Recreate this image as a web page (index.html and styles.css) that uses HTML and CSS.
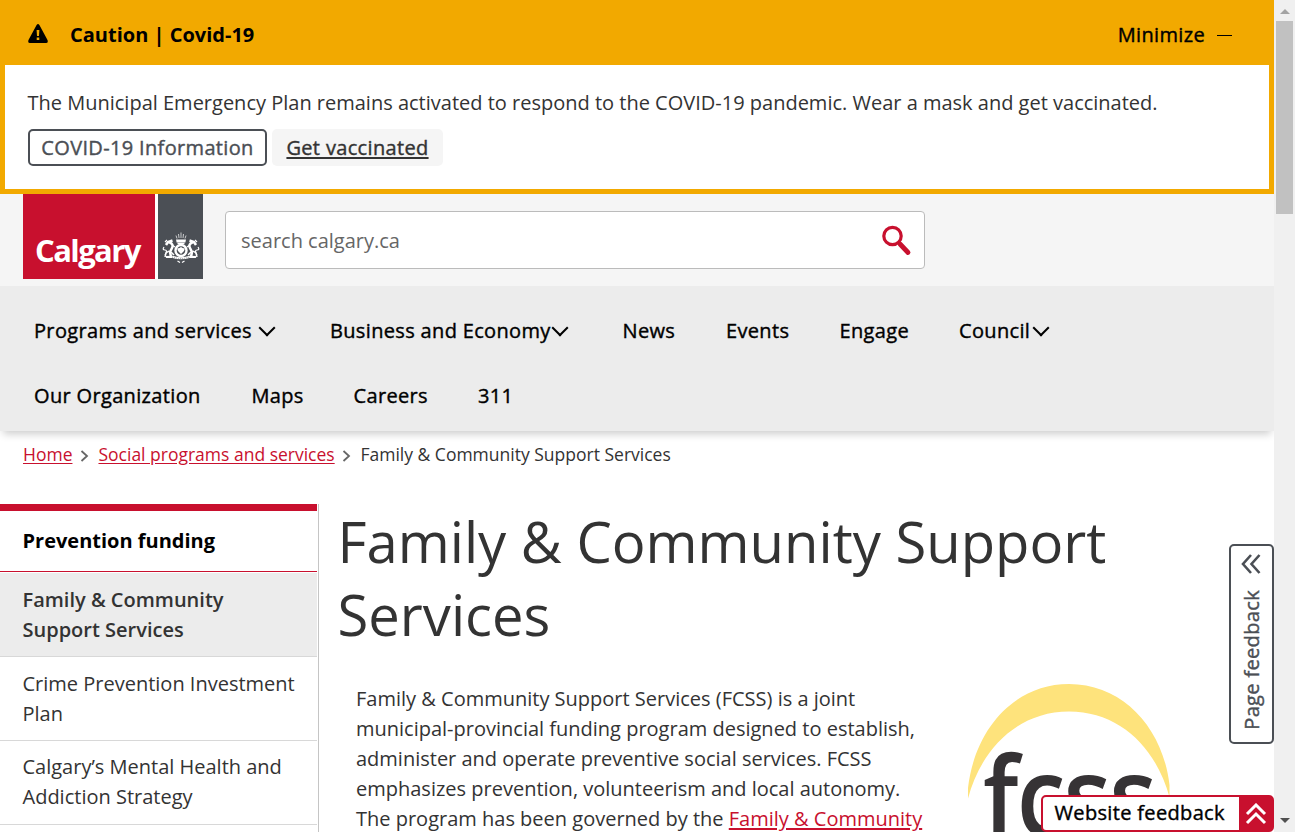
FILE: index.html
```
<!DOCTYPE html>
<html lang="en">
<head>
<meta charset="utf-8">
<title>Family &amp; Community Support Services</title>
<link rel="stylesheet" href="styles.css">
</head>
<body>
<div class="page">
  <section class="alert">
    <div class="alert-head">
      <svg class="warn" width="20" height="19" viewBox="0 0 20 19"><path fill-rule="evenodd" d="M8.6 1.1Q10-1 11.400 1.100L19.500 16Q20.500 19 18 19H2Q-.5 19 .5 16ZM8.600 6l.4 6h2l.4-6ZM8.700 13.500v2.500h2.600v-2.500Z"/></svg>
      <strong class="alert-title">Caution | Covid-19</strong>
      <span class="minimize medium">Minimize</span><span class="dash"></span>
    </div>
    <div class="alert-body">
      <p class="alert-text">The Municipal Emergency Plan remains activated to respond to the COVID-19 pandemic. Wear a mask and get vaccinated.</p>
      <div class="buttons"><a class="btn outline medium"><span>COVID-19 Information</span></a><a class="btn soft medium"><span>Get vaccinated</span></a></div>
    </div>
  </section>
  <header class="header">
    <div class="logo">
      <div class="logo-red"><span>Calgary</span></div>
      <div class="logo-grey">
        <svg width="38" height="34" viewBox="0 0 38 34" fill="#fff" stroke="#fff">
          <path stroke="none" d="M14 8.500h10l-.6 3h-8.800Z"/>
          <path fill="none" stroke-width=".7" d="M14 4.500l1 3M16.500 3l.5 4M19 1.500v5.500M21.500 3l-.5 4M24 4.500l-1 3"/>
          <path fill="none" stroke-width="1.500" d="M15.500 12.500h7"/>
          <circle cx="19" cy="19.500" r="5.500" fill="none" stroke-width="2.400"/>
          <path stroke="none" d="M19 16l1.500 1 2.300.5-.8 2.500-3 3-3-3-.8-2.500 2.300-.5Z"/>
          <path fill="none" stroke-width="2.500" d="M10.500 9.500L6 11l-2 3M7 11q5 2 3 6l-2 4 1 5"/>
          <path fill="none" stroke-width="1.500" d="M10 14l3 2M7 20l-3 2-1 4M9 21l3 3"/>
          <path fill="none" stroke-width="1.200" d="M2 16q-2 3 1 3t0 5M3 11l2-2"/>
          <path fill="none" stroke-width="2.500" d="M27.500 9.500L32 11l2 3M31 11q-5 2-3 6l2 4-1 5"/>
          <path fill="none" stroke-width="1.500" d="M28 14l-3 2M31 20l3 2 1 4M29 21l-3 3"/>
          <path fill="none" stroke-width="1.200" d="M36 16q2 3-1 3t0 5M35 11l-2-2"/>
          <path fill="none" stroke-width="2" d="M4 26l6-.3q9 3 18 0l6 .3"/>
          <path fill="none" stroke="#4b4f55" stroke-width=".6" stroke-dasharray="1 1" d="M10 26q9 3 18 0"/>
          <path fill="none" stroke-width="1.200" d="M15.500 30l2.500 1.500m2 0l2.500-1.500"/>
        </svg>
      </div>
    </div>
    <div class="search"><span>search calgary.ca</span>
      <svg width="30" height="32" viewBox="0 0 30 32" fill="none" stroke="#c8102e"><circle cx="10.500" cy="11" r="8.700" stroke-width="3.200"/><path stroke-width="4.800" stroke-linecap="round" d="M18 19l8 8.500"/></svg>
    </div>
  </header>
  <nav class="nav medium">
    <div class="nav-row">
      <a class="n1">Programs and services</a><a class="n2">Business and Economy</a><a class="n3">News</a><a class="n4">Events</a><a class="n5">Engage</a><a class="n6">Council</a>
    </div>
    <div class="nav-row second">
      <a class="m1">Our Organization</a><a class="m2">Maps</a><a class="m3">Careers</a><a class="m4">311</a>
    </div>
  </nav>
  <div class="crumbs">
    <a class="c1">Home</a><svg width="9" height="12" viewBox="0 0 9 12"><path d="M1.500 1L7 6l-5.500 5"/></svg><a class="c2">Social programs and services</a><svg width="9" height="12" viewBox="0 0 9 12"><path d="M1.500 1L7 6l-5.500 5"/></svg><span class="c3">Family &amp; Community Support Services</span>
  </div>
  <div class="content">
    <aside class="side">
      <div class="side-head">Prevention funding</div>
      <div class="side-item current">Family &amp; Community<br>Support Services</div>
      <div class="side-item">Crime Prevention Investment<br>Plan</div>
      <div class="side-item third">Calgary’s Mental Health and<br>Addiction Strategy</div>
    </aside>
    <main class="main">
      <h1>Family &amp; Community Support<br>Services</h1>
      <div class="intro">
        <p>Family &amp; Community Support Services (FCSS) is a joint<br>municipal-provincial funding program designed to establish,<br>administer and operate preventive social services. FCSS<br>emphasizes prevention, volunteerism and local autonomy.<br>The program has been governed by the <a>Family &amp; Community</a></p>
        <svg class="fcss" width="204" height="149" viewBox="0 0 204 149"><path fill="#fee37c" d="M0 114.500V104C7 44 47 0 101 0s94 44 100.500 101v12C188 64 152 27.500 101 27.500S13 65 0 114.500Z"/><text transform="translate(15 152) scale(.89 1)" fill="#363335">fcss</text></svg>
      </div>
    </main>
  </div>
</div>
<div class="scrollbar"><i class="up"></i><i class="thumb"></i><i class="down"></i></div>
<div class="page-feedback medium"><svg width="20" height="22" viewBox="0 0 20 22"><path d="M10 2L2 11l8 9M18.500 2l-8 9 8 9"/></svg><span>Page feedback</span></div>
<div class="site-feedback medium"><span>Website feedback</span><div class="fb-icon"><svg width="22" height="22" viewBox="0 0 22 22"><path d="M2 11l9-9 9 9M2 20l9-9 9 9"/></svg></div></div>
</body>
</html>
```
FILE: styles.css
```
*{box-sizing:border-box}
body{margin:0;width:1295px;height:832px;overflow:hidden;display:flex;position:relative;background:#fff;color:#333;font:400 20px/30px "Open Sans","Noto Sans",sans-serif}
p,h1{margin:0}
svg{flex:none}
a,span,strong,p,h1{white-space:nowrap}
.medium{letter-spacing:.34px;-webkit-text-stroke:.4px currentColor}
.page{width:1274px;height:832px;overflow:hidden;flex:none}
.alert{height:194px;background:#f2a900;padding:0 5px 5px}
.alert-head{height:65px;display:flex;align-items:center;padding:4px 37px 0 22px;color:#000}
.warn{margin:-3px 0 0 1px}
.alert-title{font-weight:700;margin-left:22px;flex:1}
.dash{width:15px;height:1px;background:#000;margin:2px 0 0 12px}
.alert-body{height:124px;background:#fff;padding:23px 22.500px}
.buttons{display:flex;gap:5px;margin:11px 0 0 .5px}
.btn{height:37px;border-radius:5px;display:flex;align-items:center;justify-content:center}
.outline{width:239px;border:2px solid #4b4f55;color:#4b4f55}
.soft{width:171px;background:#f5f5f5}
.soft span{text-decoration:underline;text-decoration-thickness:2px;text-underline-offset:2px}
.header{height:92px;background:#f5f5f5;display:flex;padding-left:23px}
.logo{display:flex;width:180px;height:85px;gap:3px;background:#fff}
.logo-red{width:132px;background:#c8102e;color:#fff;font-size:31px;font-weight:700;line-height:36px;padding:38px 0 0 12px;letter-spacing:-1.600px}
.logo-grey{width:45px;background:#4b4f55;padding:37px 0 0 4px}
.search{width:700px;height:58px;margin:17px 0 0 22px;border:1px solid #bbb;border-radius:4px;background:#fff;display:flex;align-items:center;justify-content:space-between;padding:2px 12px 0 15px;color:#666}
.nav{height:145px;background:#ececec;padding:30px 34px 0;color:#000;box-shadow:0 6px 8px -3px #0003}
.nav-row{display:flex}
.nav-row.second{margin-top:35px}
.nav a{display:flex;align-items:center;justify-content:space-between;flex:none}
.n1:after,.n2:after,.n6:after{content:"";width:10px;height:10px;border:solid #000;border-width:0 2px 2px 0;transform:rotate(45deg);margin:-6px 3px 0 0}
.n1{width:242px}
.n2{width:239px;margin-left:54px}
.n3{width:103.500px;margin-left:53.500px}
.n4{width:113.500px}
.n5{width:119.500px}
.n6{width:91px}
.m1{width:217.500px}
.m2{width:102px}
.m3{width:124.500px}
.crumbs{height:73px;padding:8px 23px 0;display:flex;font-size:17.500px}
.crumbs svg{margin:11px 9px 0 8px;fill:none;stroke:#666;stroke-width:1.800}
.c1,.c2,.intro a{color:#c8102e;text-decoration:underline;text-underline-offset:2px}
.c2{width:236px}
.content{display:flex;height:328px}
.side{width:319px;border-right:1px solid #c5c5c5;padding-right:1px;flex:none}
.side-head{height:68px;border-top:7px solid #c8102e;border-bottom:1px solid #c8102e;padding:15px 22.500px;font-weight:700;color:#000;line-height:30px}
.side-item{height:84px;padding:12px 22.500px;border-bottom:1px solid #d8d8d8;white-space:nowrap}
.side-item.current{margin-top:1px;background:#ececec;font-weight:600}
.side-item.third{padding-top:11px}
.main{padding:0 0 0 18.500px}
h1{font-size:56.200px;font-weight:400;line-height:73px;position:relative;top:.5px}
.intro{display:flex;padding:34px 0 0 18.500px}
.intro p{width:612px}
.fcss text{font:600 110px "Open Sans",sans-serif;letter-spacing:-2px}
.scrollbar{width:21px;height:832px;background:#f0f0f0;display:flex;flex-direction:column;align-items:center;flex:none}
.up{border:5px solid transparent;border-top:0;border-bottom-color:#a3a3a3;margin-top:9px}
.thumb{width:17px;height:193px;background:#c1c1c1;margin-top:7px}
.down{border:5px solid transparent;border-bottom:0;border-top-color:#505050;margin-top:auto;margin-bottom:9px}
.page-feedback{position:absolute;left:1229px;top:544px;width:45px;height:200px;border:2px solid #4b4f55;border-radius:5px;background:#fff;color:#4b4f55;display:flex;flex-direction:column;align-items:center;padding-top:7px}
.page-feedback svg{fill:none;stroke:#4b4f55;stroke-width:2.600;margin-right:2px}
.page-feedback span{writing-mode:vertical-rl;transform:rotate(180deg);margin-top:15px}
.site-feedback{position:absolute;left:1041px;top:795px;width:233px;height:37px;border:2px solid #c8102e;border-radius:5px;background:#fff;color:#000;display:flex;justify-content:space-between;align-items:center;padding-left:11.500px}
.site-feedback span{margin-top:-2px}
.fb-icon{width:33px;height:33px;background:#c8102e;display:grid;place-items:center}
.fb-icon svg{fill:none;stroke:#fff;stroke-width:3}
```
